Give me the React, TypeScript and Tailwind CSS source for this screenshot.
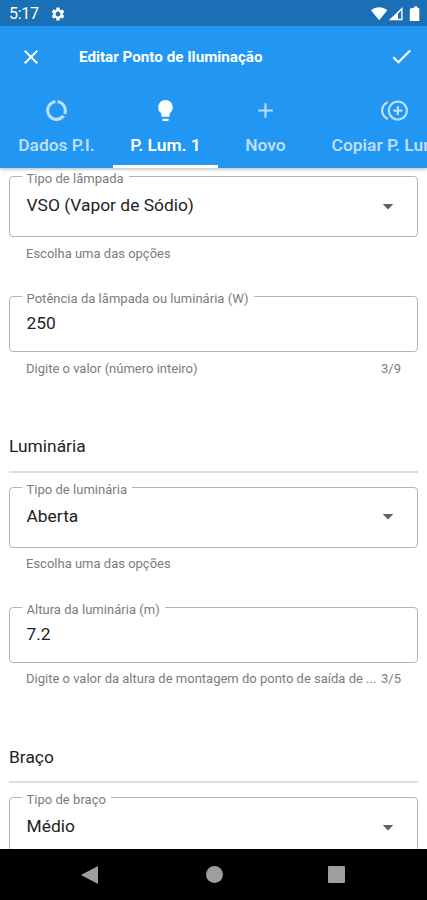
import type { ReactNode } from "react";
import {
  MdSettings,
  MdClose,
  MdCheck,
  MdDataUsage,
  MdLightbulb,
  MdAdd,
  MdControlPointDuplicate,
} from "react-icons/md";

function StatusBar() {
  return (
    <div className="flex h-[26px] items-center justify-between bg-[#1a6fb5] pt-[2px] pr-[7px] pl-[9px] text-white">
      <div className="flex items-center gap-[11px]">
        <span className="text-[16px] leading-[24px] tracking-[-0.3px]">5:17</span>
        <MdSettings size={16} />
      </div>
      <svg width="49" height="16" viewBox="0 0 49 16" fill="white">
        <path d="M0 4.2C4.8 .3 11.500 .3 16.300 4.200L8.200 14.300Z" />
        <path d="M31.600 1V14.300H17.800ZM30.200 4.500L27 7.700V12.800H30.200Z" fillRule="evenodd" />
        <path d="M41 2H43V.5H46.500V2H48.300V15H38.800V3.500Q38.800 2 41 2Z" />
      </svg>
    </div>
  );
}

function Tab({ icon, label, className, active }: { icon: ReactNode; label: string; className: string; active?: boolean }) {
  return (
    <div
      className={`flex h-full shrink-0 flex-col items-center border-b-[3px] pt-[10px] ${
        active ? "border-white text-white" : "border-transparent text-[#bbdefb]"
      } ${className}`}
    >
      <div className="flex h-[26px] items-center justify-center">{icon}</div>
      <span className="mt-[12px] text-[17.4px] leading-[20px] font-semibold whitespace-nowrap">{label}</span>
    </div>
  );
}

type FieldProps = {
  label: string;
  value: string;
  helper: string;
  counter?: string;
  select?: boolean;
};

function Field({ label, value, helper, counter, select }: FieldProps) {
  return (
    <div className={select ? "h-[120px]" : "h-[119px]"}>
      <div
        className={`relative flex justify-between rounded-[4px] border border-[#b4b4b4] pr-[23px] pl-[16.5px] ${
          select ? "h-[61px] pt-[17px]" : "h-[56px] pt-[15px]"
        }`}
      >
        <span className="absolute -top-[6px] left-[12px] bg-white pr-[5px] pl-[4.500px] text-[13px] leading-[16px] tracking-[0.03px] whitespace-nowrap text-[#7c7c7c]">
          {label}
        </span>
        <span className="text-[17.4px] leading-[22px] text-[#222]">{value}</span>
        {select && (
          <svg className="mt-[9.5px]" width="12" height="6" viewBox="0 0 12 6">
            <path d="M.7 0H11.300L6 5.500Z" fill="#616161" />
          </svg>
        )}
      </div>
      <div className="mt-[8.5px] flex justify-between px-[17px] text-[13px] leading-[16px] whitespace-nowrap text-[#7c7c7c]">
        <span>{helper}</span>
        {counter && <span>{counter}</span>}
      </div>
    </div>
  );
}

function Section({ title }: { title: string }) {
  return (
    <div className="mt-[20px] mb-[14px] border-b-2 border-[#dedede] pb-[13.5px] text-[17.4px] leading-[22px] text-[#222]">
      {title}
    </div>
  );
}

function NavBar() {
  return (
    <div className="flex h-[51px] shrink-0 items-center bg-black px-[81px]">
      <svg width="17" height="18" viewBox="0 0 17 18">
        <path d="M0 9L17 0V18Z" fill="#9e9e9e" />
      </svg>
      <div className="ml-[108px] h-[17px] w-[17px] rounded-full bg-[#9e9e9e]" />
      <div className="ml-[105px] h-[17px] w-[17px] shrink-0 rounded-[1px] bg-[#9e9e9e]" />
    </div>
  );
}

export default function App() {
  return (
    <div className="flex h-[900px] w-[427px] flex-col overflow-hidden bg-white font-['Roboto',sans-serif]">
      <div className="shrink-0 bg-[#2196f3] shadow-[0_1px_4px_rgba(0,0,0,0.3)]">
        <StatusBar />
        <header className="flex h-[61px] items-center pr-[13px] pl-[19px] text-white">
          <MdClose size={24} />
          <h1 className="ml-[36px] flex-1 text-[15.2px] leading-[20px] font-bold">Editar Ponto de Iluminação</h1>
          <MdCheck size={25} />
        </header>
        <nav className="flex h-[81px] overflow-hidden">
          <Tab className="w-[113px]" icon={<MdDataUsage size={25} />} label="Dados P.I." />
          <Tab className="w-[105px]" icon={<MdLightbulb size={25} />} label="P. Lum. 1" active />
          <Tab className="w-[95px]" icon={<MdAdd size={25} />} label="Novo" />
          <Tab className="w-[163px]" icon={<MdControlPointDuplicate size={27} />} label="Copiar P. Lum. 1" />
        </nav>
      </div>
      <main className="min-h-0 flex-1 overflow-hidden px-[9px] pt-[8px]">
        <Field select label="Tipo de lâmpada" value="VSO (Vapor de Sódio)" helper="Escolha uma das opções" />
        <Field label="Potência da lâmpada ou luminária (W)" value="250" helper="Digite o valor (número inteiro)" counter="3/9" />
        <Section title="Luminária" />
        <Field select label="Tipo de luminária" value="Aberta" helper="Escolha uma das opções" />
        <Field
          label="Altura da luminária (m)"
          value="7.2"
          helper="Digite o valor da altura de montagem do ponto de saída de ..."
          counter="3/5"
        />
        <Section title="Braço" />
        <Field select label="Tipo de braço" value="Médio" helper="Escolha uma das opções" />
      </main>
      <NavBar />
    </div>
  );
}
